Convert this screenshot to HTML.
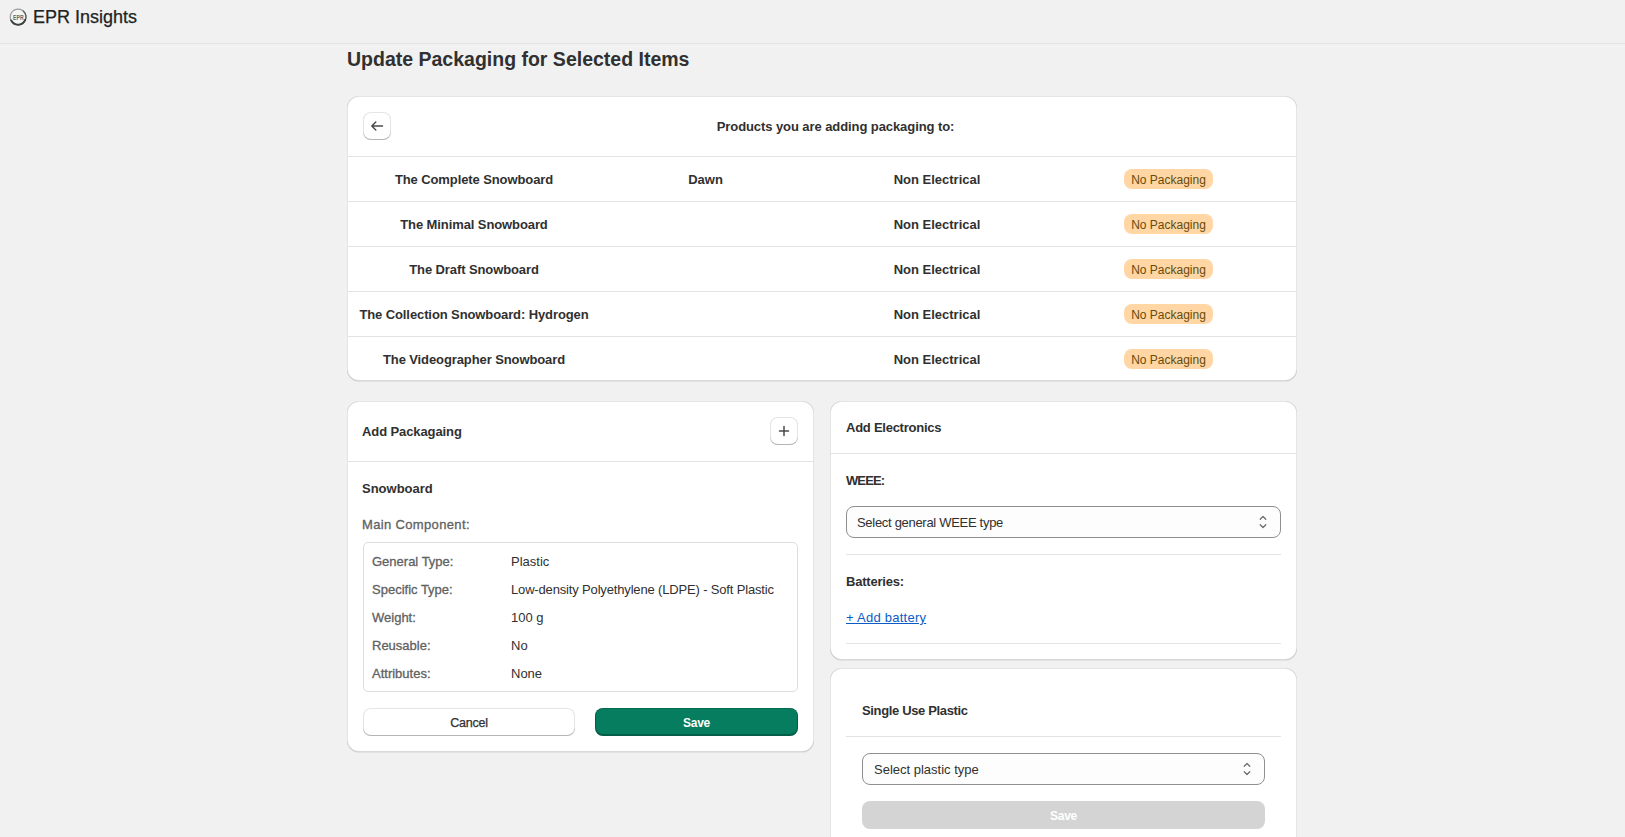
<!DOCTYPE html>
<html><head><meta charset="utf-8">
<style>
*{box-sizing:border-box;margin:0;padding:0}
html,body{width:1625px;height:837px;overflow:hidden;background:#f1f1f1;font-family:"Liberation Sans",sans-serif;color:#303030}
.abs{position:absolute}
.t{position:absolute;white-space:nowrap}
.card{position:absolute;background:#fff;border-radius:12px;box-shadow:0 1px 0 0 rgba(26,26,26,.07), inset 1px 0 0 0 rgba(0,0,0,.1), inset -1px 0 0 0 rgba(0,0,0,.1), inset 0 -1px 0 0 rgba(0,0,0,.15), inset 0 1px 0 0 rgba(204,204,204,.5)}
.hr{position:absolute;height:1px;background:#e3e3e3}
.btn{position:absolute;background:#fff;border-radius:8px;box-shadow:inset 0 -1px 0 0 #b5b5b5, inset 0 0 0 1px rgba(0,0,0,.1)}
.badge{position:absolute;background:#ffd6a4;border-radius:8px;height:20px}
.sel{position:absolute;background:#fdfdfd;border:1px solid #8f8f8f;border-radius:8px;height:32px}
</style></head><body>

<div class="hr" style="left:0px;top:43px;width:1625px;background:#e4e4e4"></div>
<div class="hr" style="left:0px;top:46px;width:1625px;background:#f5f5f5"></div>
<svg class="abs" style="left:8px;top:7px" width="20" height="20" viewBox="0 0 20 20">
  <circle cx="10.1" cy="10" r="7.9" fill="#f4f6f5" stroke="#9a9e9b" stroke-width="1.2"/>
  <path d="M15.18 3.95 A7.9 7.9 0 1 1 2.68 12.7" fill="none" stroke="#5a605c" stroke-width="1.2" stroke-linecap="round"/>
  <path d="M17.24 12.6 A7.6 7.6 0 0 1 3.52 13.8" fill="none" stroke="#3d433f" stroke-width="1.8" stroke-linecap="round"/>
  <text x="10.35" y="13" font-size="6.6" font-family="Liberation Sans" font-weight="700" text-anchor="middle" textLength="10.6" lengthAdjust="spacingAndGlyphs" fill="#646a66">EPR</text>
</svg>
<div class="t" style="left:33px;top:5px;font-size:18px;line-height:24px;font-weight:400;color:#222;-webkit-text-stroke:0.25px #222;">EPR Insights</div>
<div class="t" style="left:347px;top:47px;font-size:19.5px;line-height:24px;font-weight:700;color:#303030;">Update Packaging for Selected Items</div>
<div class="card" style="left:347px;top:96px;width:950px;height:285px"></div>
<div class="btn" style="left:363px;top:112px;width:28px;height:28px"></div>
<svg class="abs" style="left:367px;top:116px" width="20" height="20" viewBox="0 0 20 20"><path d="M15.5 10H4.8M8.8 6L4.8 10L8.8 14" fill="none" stroke="#4a4a4a" stroke-width="1.5" stroke-linecap="round" stroke-linejoin="round"/></svg>
<div class="t" style="left:635.50px;width:400px;text-align:center;top:117px;font-size:13px;line-height:20px;font-weight:700;color:#303030;letter-spacing:-0.08px;">Products you are adding packaging to:</div>
<div class="hr" style="left:348px;top:156px;width:948px;background:#e3e3e3"></div>
<div class="t" style="left:324.00px;width:300px;text-align:center;top:170px;font-size:13px;line-height:20px;font-weight:700;color:#303030;letter-spacing:-0.1px;">The Complete Snowboard</div>
<div class="t" style="left:655.50px;width:100px;text-align:center;top:170px;font-size:13px;line-height:20px;font-weight:700;color:#303030;">Dawn</div>
<div class="t" style="left:837.00px;width:200px;text-align:center;top:170px;font-size:13px;line-height:20px;font-weight:700;color:#303030;">Non Electrical</div>
<div class="badge" style="left:1124px;top:169px;width:89px"></div>
<div class="t" style="left:1108.50px;width:120px;text-align:center;top:170px;font-size:12px;line-height:20px;font-weight:400;color:#674b0c;">No Packaging</div>
<div class="hr" style="left:348px;top:201px;width:948px;background:#e3e3e3"></div>
<div class="t" style="left:324.00px;width:300px;text-align:center;top:215px;font-size:13px;line-height:20px;font-weight:700;color:#303030;letter-spacing:-0.1px;">The Minimal Snowboard</div>
<div class="t" style="left:837.00px;width:200px;text-align:center;top:215px;font-size:13px;line-height:20px;font-weight:700;color:#303030;">Non Electrical</div>
<div class="badge" style="left:1124px;top:214px;width:89px"></div>
<div class="t" style="left:1108.50px;width:120px;text-align:center;top:215px;font-size:12px;line-height:20px;font-weight:400;color:#674b0c;">No Packaging</div>
<div class="hr" style="left:348px;top:246px;width:948px;background:#e3e3e3"></div>
<div class="t" style="left:324.00px;width:300px;text-align:center;top:260px;font-size:13px;line-height:20px;font-weight:700;color:#303030;letter-spacing:-0.1px;">The Draft Snowboard</div>
<div class="t" style="left:837.00px;width:200px;text-align:center;top:260px;font-size:13px;line-height:20px;font-weight:700;color:#303030;">Non Electrical</div>
<div class="badge" style="left:1124px;top:259px;width:89px"></div>
<div class="t" style="left:1108.50px;width:120px;text-align:center;top:260px;font-size:12px;line-height:20px;font-weight:400;color:#674b0c;">No Packaging</div>
<div class="hr" style="left:348px;top:291px;width:948px;background:#e3e3e3"></div>
<div class="t" style="left:324.00px;width:300px;text-align:center;top:305px;font-size:13px;line-height:20px;font-weight:700;color:#303030;letter-spacing:-0.1px;">The Collection Snowboard: Hydrogen</div>
<div class="t" style="left:837.00px;width:200px;text-align:center;top:305px;font-size:13px;line-height:20px;font-weight:700;color:#303030;">Non Electrical</div>
<div class="badge" style="left:1124px;top:304px;width:89px"></div>
<div class="t" style="left:1108.50px;width:120px;text-align:center;top:305px;font-size:12px;line-height:20px;font-weight:400;color:#674b0c;">No Packaging</div>
<div class="hr" style="left:348px;top:336px;width:948px;background:#e3e3e3"></div>
<div class="t" style="left:324.00px;width:300px;text-align:center;top:350px;font-size:13px;line-height:20px;font-weight:700;color:#303030;letter-spacing:-0.1px;">The Videographer Snowboard</div>
<div class="t" style="left:837.00px;width:200px;text-align:center;top:350px;font-size:13px;line-height:20px;font-weight:700;color:#303030;">Non Electrical</div>
<div class="badge" style="left:1124px;top:349px;width:89px"></div>
<div class="t" style="left:1108.50px;width:120px;text-align:center;top:350px;font-size:12px;line-height:20px;font-weight:400;color:#674b0c;">No Packaging</div>
<div class="card" style="left:347px;top:401px;width:467px;height:351px"></div>
<div class="t" style="left:362px;top:422px;font-size:13px;line-height:20px;font-weight:700;color:#303030;letter-spacing:-0.1px;">Add Packagaing</div>
<div class="btn" style="left:770px;top:417px;width:28px;height:28px"></div>
<svg class="abs" style="left:774px;top:421px" width="20" height="20" viewBox="0 0 20 20"><path d="M10 5.5V14.5M5.5 10H14.5" fill="none" stroke="#4a4a4a" stroke-width="1.5" stroke-linecap="round"/></svg>
<div class="hr" style="left:348px;top:461px;width:465px;background:#e3e3e3"></div>
<div class="t" style="left:362px;top:479px;font-size:13px;line-height:20px;font-weight:700;color:#303030;">Snowboard</div>
<div class="t" style="left:362px;top:515px;font-size:13px;line-height:20px;font-weight:400;color:#616161;letter-spacing:0.35px;-webkit-text-stroke:0.3px #616161;">Main Component:</div>
<div class="abs" style="left:363px;top:542px;width:435px;height:150px;border:1px solid #dedede;border-radius:5px"></div>
<div class="t" style="left:372px;top:552px;font-size:13px;line-height:20px;font-weight:400;color:#616161;-webkit-text-stroke:0.3px #616161;">General Type:</div>
<div class="t" style="left:511px;top:552px;font-size:13px;line-height:20px;font-weight:400;color:#303030;">Plastic</div>
<div class="t" style="left:372px;top:580px;font-size:13px;line-height:20px;font-weight:400;color:#616161;-webkit-text-stroke:0.3px #616161;">Specific Type:</div>
<div class="t" style="left:511px;top:580px;font-size:13px;line-height:20px;font-weight:400;color:#303030;letter-spacing:-0.16px;">Low-density Polyethylene (LDPE) - Soft Plastic</div>
<div class="t" style="left:372px;top:608px;font-size:13px;line-height:20px;font-weight:400;color:#616161;-webkit-text-stroke:0.3px #616161;">Weight:</div>
<div class="t" style="left:511px;top:608px;font-size:13px;line-height:20px;font-weight:400;color:#303030;">100 g</div>
<div class="t" style="left:372px;top:636px;font-size:13px;line-height:20px;font-weight:400;color:#616161;-webkit-text-stroke:0.3px #616161;">Reusable:</div>
<div class="t" style="left:511px;top:636px;font-size:13px;line-height:20px;font-weight:400;color:#303030;">No</div>
<div class="t" style="left:372px;top:664px;font-size:13px;line-height:20px;font-weight:400;color:#616161;-webkit-text-stroke:0.3px #616161;">Attributes:</div>
<div class="t" style="left:511px;top:664px;font-size:13px;line-height:20px;font-weight:400;color:#303030;">None</div>
<div class="btn" style="left:363px;top:708px;width:212px;height:28px"></div>
<div class="t" style="left:369.00px;width:200px;text-align:center;top:713px;font-size:12.5px;line-height:20px;font-weight:400;color:#303030;letter-spacing:-0.2px;-webkit-text-stroke:0.25px #303030;">Cancel</div>
<div class="abs" style="left:595px;top:708px;width:203px;height:28px;background:#067d5e;border-radius:8px;box-shadow:inset 0 -1px 0 1px rgba(0,0,0,.25), inset 0 1px 0 0 rgba(0,0,0,.15)"></div>
<div class="t" style="left:596.50px;width:200px;text-align:center;top:713px;font-size:12px;line-height:20px;font-weight:700;color:#fff;letter-spacing:-0.3px;">Save</div>
<div class="card" style="left:830px;top:401px;width:467px;height:259px"></div>
<div class="t" style="left:846px;top:418px;font-size:13px;line-height:20px;font-weight:700;color:#303030;letter-spacing:-0.25px;">Add Electronics</div>
<div class="hr" style="left:831px;top:453px;width:465px;background:#e3e3e3"></div>
<div class="t" style="left:846px;top:471px;font-size:13px;line-height:20px;font-weight:700;color:#303030;letter-spacing:-0.9px;">WEEE:</div>
<div class="sel" style="left:846px;top:506px;width:435px"></div>
<div class="t" style="left:857px;top:513px;font-size:13px;line-height:20px;font-weight:400;color:#303030;letter-spacing:-0.3px;">Select general WEEE type</div>
<svg class="abs" style="left:1253px;top:512px" width="20" height="20" viewBox="0 0 20 20"><path d="M7.2 7.3L10 4.5L12.8 7.3M7.2 12.7L10 15.5L12.8 12.7" fill="none" stroke="#6b6b6b" stroke-width="1.25" stroke-linecap="round" stroke-linejoin="round"/></svg>
<div class="hr" style="left:846px;top:554px;width:435px;background:#e3e3e3"></div>
<div class="t" style="left:846px;top:572px;font-size:13px;line-height:20px;font-weight:700;color:#303030;letter-spacing:-0.2px;">Batteries:</div>
<div class="t" style="left:846px;top:608px;font-size:13px;line-height:20px;font-weight:400;color:#0b5cc4;letter-spacing:0.25px;text-decoration:underline;">+ Add battery</div>
<div class="hr" style="left:846px;top:643px;width:435px;background:#e3e3e3"></div>
<div class="card" style="left:830px;top:668px;width:467px;height:200px"></div>
<div class="t" style="left:862px;top:701px;font-size:13px;line-height:20px;font-weight:700;color:#303030;letter-spacing:-0.35px;">Single Use Plastic</div>
<div class="hr" style="left:846px;top:736px;width:435px;background:#e3e3e3"></div>
<div class="sel" style="left:862px;top:753px;width:403px"></div>
<div class="t" style="left:874px;top:760px;font-size:13px;line-height:20px;font-weight:400;color:#303030;">Select plastic type</div>
<svg class="abs" style="left:1237px;top:759px" width="20" height="20" viewBox="0 0 20 20"><path d="M7.2 7.3L10 4.5L12.8 7.3M7.2 12.7L10 15.5L12.8 12.7" fill="none" stroke="#6b6b6b" stroke-width="1.25" stroke-linecap="round" stroke-linejoin="round"/></svg>
<div class="abs" style="left:862px;top:801px;width:403px;height:28px;background:#d4d4d4;border-radius:8px"></div>
<div class="t" style="left:963.50px;width:200px;text-align:center;top:806px;font-size:12px;line-height:20px;font-weight:700;color:#fff;letter-spacing:-0.3px;">Save</div>
</body></html>
